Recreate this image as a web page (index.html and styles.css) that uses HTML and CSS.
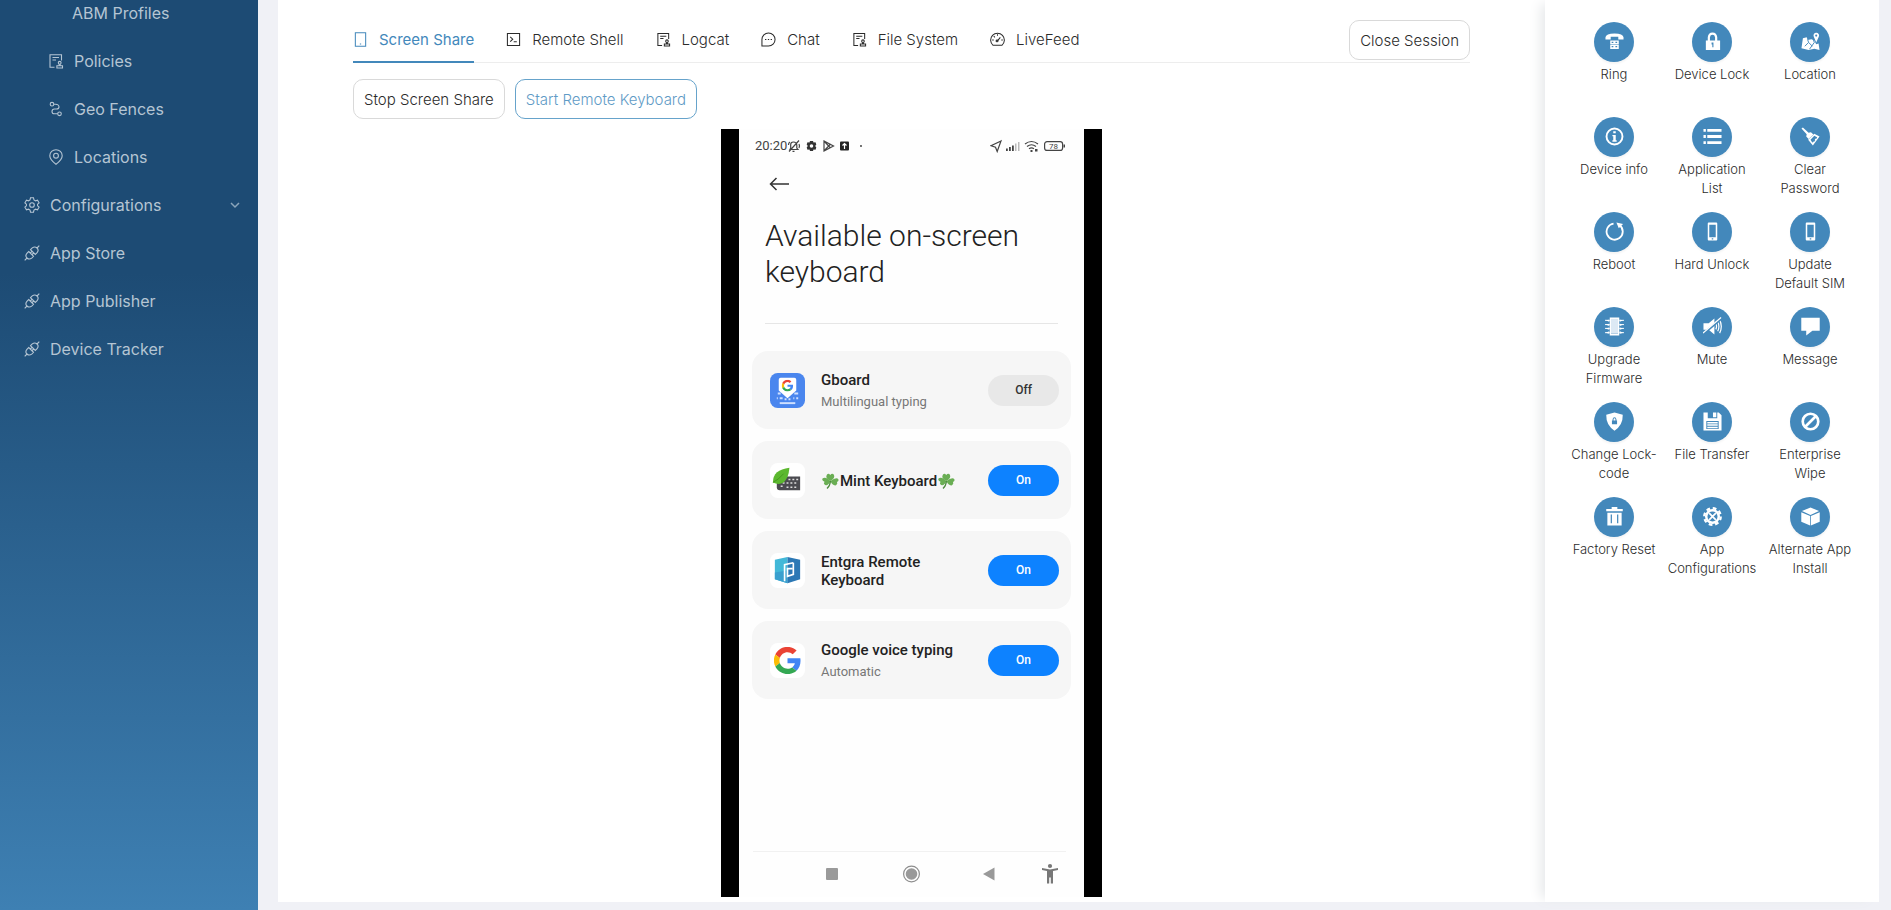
FILE: index.html
```html
<!DOCTYPE html>
<html lang="en">
<head>
<meta charset="utf-8">
<title>Device session</title>
<link rel="stylesheet" href="styles.css">
</head>
<body>
<svg class="defs" aria-hidden="true">
  <defs>
    <symbol id="i-audit" viewBox="0 0 16 16"><path d="M6.500 14.300H2V1.700H13.500V7.500M4.500 4.500H11M4.500 7H8" /><circle cx="11.700" cy="9.800" r="1.400"/><path d="M11.200 11.200V12.700M12.200 11.200V12.700M8.900 12.700H14.500V15H8.900Z"/></symbol>
    <symbol id="i-fence" viewBox="0 0 16 16"><circle cx="4" cy="3.200" r="1.800"/><circle cx="11.500" cy="12.800" r="1.800"/><path d="M5.800 3.300H7.500Q11 3.500 11 6Q11 8 8.500 8H6.500Q4 8 4 10.400T6.500 12.800H9.700"/></symbol>
    <symbol id="i-pin" viewBox="0 0 16 16"><path d="M8 15.200C4.500 12.600 1.800 10 1.800 6.700A6.200 6 0 0 1 14.200 6.700C14.200 10 11.500 12.600 8 15.200Z"/><circle cx="8" cy="6.700" r="2.400"/></symbol>
    <symbol id="i-gear" viewBox="0 0 16 16"><path d="M6.500 .8H9.500L10 3L11.500 3.800L13.500 3.200L15.100 5.800L13.600 7.200V8.800L15.100 10.200L13.500 12.800L11.500 12.200L10 13L9.500 15.200H6.500L6 13L4.500 12.200L2.500 12.800L.9 10.200L2.400 8.800V7.200L.9 5.800L2.500 3.200L4.500 3.800L6 3Z"/><circle cx="8" cy="8" r="2.300"/></symbol>
    <symbol id="i-api" viewBox="0 0 16 16"><path d="M15.300 .7L13 3M3 13L.7 15.300M6.500 4.700L8.300 2.900Q10.800 1 13 3T13.100 7.700L11.300 9.500ZM4.700 6.500L9.500 11.300L7.700 13.100Q5.200 15 3 13T2.900 8.300ZM6.300 8L8 6.300M8 9.700L9.700 8"/></symbol>
    <symbol id="i-tablet" viewBox="0 0 16 16"><path d="M2.500 .8H13.500V15.200H2.500ZM7.300 12.800H8.700"/></symbol>
    <symbol id="i-code" viewBox="0 0 16 16"><path d="M1.500 1.500H14.500V14.500H1.500ZM4.500 5.300L7.200 7.700L4.500 10.200M8.200 10.500H11.500"/></symbol>
    <symbol id="i-chat" viewBox="0 0 16 16"><path d="M1 15V8A7 7 0 1 1 8 15ZM4.300 8H5.700M7.300 8H8.700M10.300 8H11.700"/></symbol>
    <symbol id="i-dash" viewBox="0 0 16 16"><path d="M3.300 14.200A7.300 7.300 0 1 1 12.700 14.200ZM8 9.500L11 5.800M8 2.500V4M2.300 8.500H4M12 8.500H13.700M4 4.500L5.200 5.700"/><circle cx="7.500" cy="9.500" r="1"/></symbol>
    <symbol id="i-clover" viewBox="0 0 18 18"><g fill="#6aae54"><path d="M9 9Q3 6 5.500 2.500Q7.200 1 8.700 3Q10.800 .8 12.400 2.800Q14 6 9 9Z"/><path d="M9 9Q7 14 3.500 13Q1.500 11.500 3 9.700Q0 8.500 1 6.500Q4 4 9 9Z"/><path d="M9 9Q15 4.500 17 7.500Q17.500 9.200 15.500 10Q16.500 12 14.500 13.300Q11 14 9 9Z"/></g><path d="M9 9Q8.500 14 5.500 16.500" fill="none" stroke="#4f8c40" stroke-width="1.300"/></symbol>
    <symbol id="i-phone" viewBox="0 0 20 20"><path fill-rule="evenodd" d="M6 .5H14Q15 .5 15 1.500V18.500Q15 19.500 14 19.500H6Q5 19.500 5 18.500V1.500Q5 .5 6 .5ZM6.600 3V16H13.400V3ZM9.200 17.200V18.400H10.800V17.200Z"/></symbol>
    <symbol id="i-google" viewBox="0 0 48 48"><path fill="#ea4335" d="M24 9.500c3.540 0 6.710 1.220 9.210 3.600l6.850-6.850C35.900 2.380 30.470 0 24 0 14.620 0 6.510 5.380 2.560 13.220l7.980 6.190C12.430 13.720 17.740 9.500 24 9.500z"/><path fill="#4285f4" d="M46.980 24.550c0-1.570-.15-3.090-.38-4.550H24v9.020h12.940c-.58 2.960-2.260 5.480-4.780 7.180l7.730 6c4.510-4.180 7.090-10.360 7.090-17.650z"/><path fill="#fbbc05" d="M10.530 28.590c-.48-1.450-.76-2.990-.76-4.590s.27-3.140.76-4.590l-7.980-6.190C.92 16.460 0 20.120 0 24c0 3.880.92 7.540 2.560 10.780l7.970-6.190z"/><path fill="#34a853" d="M24 48c6.480 0 11.930-2.130 15.890-5.810l-7.730-6c-2.150 1.450-4.920 2.300-8.160 2.300-6.260 0-11.570-4.220-13.470-9.910l-7.980 6.190C6.510 42.620 14.620 48 24 48z"/></symbol>
  </defs>
</svg>

<div class="app">
  <nav class="sidebar" aria-label="Main">
    <a class="nav-link nav-text" href="#">ABM Profiles</a>
    <a class="nav-link nav-sub" href="#"><svg class="line-icon"><use href="#i-audit"/></svg>Policies</a>
    <a class="nav-link nav-sub" href="#"><svg class="line-icon"><use href="#i-fence"/></svg>Geo Fences</a>
    <a class="nav-link nav-sub" href="#"><svg class="line-icon"><use href="#i-pin"/></svg>Locations</a>
    <a class="nav-link" href="#"><svg class="line-icon"><use href="#i-gear"/></svg>Configurations<svg class="chevron" viewBox="0 0 10 10"><path d="M1 3L5 7L9 3"/></svg></a>
    <a class="nav-link" href="#"><svg class="line-icon"><use href="#i-api"/></svg>App Store</a>
    <a class="nav-link" href="#"><svg class="line-icon"><use href="#i-api"/></svg>App Publisher</a>
    <a class="nav-link" href="#"><svg class="line-icon"><use href="#i-api"/></svg>Device Tracker</a>
  </nav>

  <div class="page">
    <main class="session">
      <header class="tabbar">
        <div class="tabs" role="tablist">
          <button class="tab tab-active" role="tab" aria-selected="true"><svg class="line-icon"><use href="#i-tablet"/></svg>Screen Share</button>
          <button class="tab" role="tab"><svg class="line-icon"><use href="#i-code"/></svg>Remote Shell</button>
          <button class="tab" role="tab"><svg class="line-icon"><use href="#i-audit"/></svg>Logcat</button>
          <button class="tab" role="tab"><svg class="line-icon"><use href="#i-chat"/></svg>Chat</button>
          <button class="tab" role="tab"><svg class="line-icon"><use href="#i-audit"/></svg>File System</button>
          <button class="tab" role="tab"><svg class="line-icon"><use href="#i-dash"/></svg>LiveFeed</button>
        </div>
        <button class="btn">Close Session</button>
      </header>
      <div class="actions">
        <button class="btn">Stop Screen Share</button>
        <button class="btn btn-accent">Start Remote Keyboard</button>
      </div>

      <section class="phone" aria-label="Shared screen">
        <div class="status">
          <span class="clock">20:20</span>
          <svg class="status-left" viewBox="0 0 80 14"><g fill="none" stroke="#444" stroke-width="1.200"><path d="M3 10.500H11L9.800 9V6Q9.500 3 6.500 3T3.700 6V9ZM5.500 12.300H7.500M2 12.500L12 1.500M1.500 6Q1.500 4 2.800 3M12 9Q13 7 12 5"/><path d="M37 2V12L46.500 7ZM37 2L43.500 9M37 12L43.500 5"/></g><path fill="#333" fill-rule="evenodd" d="M23 2H26L26.500 3.500L28.500 3.300L29.300 5.500L28.200 7L29.300 8.500L28.500 10.700L26.500 10.500L26 12H23L22.500 10.500L20.500 10.700L19.700 8.500L20.800 7L19.700 5.500L20.500 3.300L22.500 3.500ZM24.500 5.200A1.800 1.800 0 1 0 24.500 8.800A1.800 1.800 0 1 0 24.500 5.200Z"/><rect x="53" y="2.500" width="9" height="9" rx="1" fill="#222"/><path d="M57.500 10V5M55.500 6.500L57.500 4.500L59.500 6.500" stroke="#fff" fill="none" stroke-width="1.200"/><circle cx="74" cy="7" r=".9" fill="#333"/></svg>
          <svg class="status-right" viewBox="0 0 76 14"><g fill="none" stroke="#444" stroke-width="1.200"><path d="M11 2L1 6.700L5.500 8.300L7.200 12.500Z"/><path d="M35 5Q41.500 0 48 5M37 7.500Q41.500 4 46 7.500M39 9.800Q41.500 8 44 9.800"/><rect x="54.600" y="2.600" width="18" height="8.800" rx="2.500"/></g><path fill="#444" d="M16 9.500H17.800V12H16ZM19 8H20.800V12H19ZM22 6.500H23.800V12H22ZM40.500 11H42.500V13H40.500ZM45 10H47.500V12.500H45ZM73.500 5.500H75V8.500H73.500Z"/><path fill="#bbb" d="M25 4.500H26.500V12H25ZM28 3H29.500V12H28Z"/><text x="63.500" y="10" class="battery">78</text></svg>
        </div>
        <svg class="back" viewBox="0 0 20 14"><path d="M20 7H1.500M7.500 1L1.500 7L7.500 13"/></svg>
        <h1 class="phone-title">Available on-screen keyboard</h1>
        <ul class="keyboards">
          <li class="keyboard">
            <svg class="app-icon" viewBox="0 0 36 36"><rect width="36" height="36" rx="8" fill="#4a86ee"/><path d="M11 5H25Q27 5 27 7V18L18 26L9 18V7Q9 5 11 5Z" fill="#fff"/><use href="#i-google" x="12" y="7" width="12" height="12"/><path d="M8 21H11M13 26H10M7 26H8M15 27H17M19 27H21M25 21H29M24 26H25M27 26H29" stroke="#cfe0ff" stroke-width="2"/><path d="M10 31H26" stroke="#cfe0ff" stroke-width="2"/></svg>
            <div class="kb-text"><h2>Gboard</h2><p>Multilingual typing</p></div>
            <button class="switch switch-off">Off</button>
          </li>
          <li class="keyboard">
            <svg class="app-icon" viewBox="0 0 36 36"><rect width="36" height="36" rx="8" fill="#fff"/><path d="M7 14H31V28H10Q7 28 7 25Z" fill="#4b4b50"/><path d="M19 17H29M13 20.500H29M11 24H14M17 25H27" stroke="#ddd" stroke-width="1.500" stroke-dasharray="2 2"/><path d="M3 20Q3 7 20 5Q19 16 14 20Q9 23 3 20Z" fill="#5cb82f"/><path d="M3 20Q9 17 14 11" stroke="#45981f" fill="none"/></svg>
            <div class="kb-text"><h2 class="kb-clover"><svg><use href="#i-clover"/></svg>Mint Keyboard<svg><use href="#i-clover"/></svg></h2></div>
            <button class="switch">On</button>
          </li>
          <li class="keyboard">
            <svg class="app-icon" viewBox="0 0 36 36"><rect width="36" height="36" rx="8" fill="#fff"/><path d="M5 7L18 4V31L5 27Z" fill="#42b8d8"/><path d="M5 20L18 18V31L5 27Z" fill="#3aa0cf"/><path d="M18 4L31 7V27L18 31Z" fill="#2c78b5"/><path d="M15 29V12L24 10M24 10V22L18 24V16H23" fill="none" stroke="#fff" stroke-width="1.700"/></svg>
            <div class="kb-text"><h2>Entgra Remote Keyboard</h2></div>
            <button class="switch">On</button>
          </li>
          <li class="keyboard">
            <svg class="app-icon" viewBox="0 0 36 36"><rect width="36" height="36" rx="8" fill="#fff"/><use href="#i-google" x="4" y="4" width="28" height="28"/></svg>
            <div class="kb-text"><h2>Google voice typing</h2><p>Automatic</p></div>
            <button class="switch">On</button>
          </li>
        </ul>
        <svg class="softkeys" viewBox="-1 0 319 46"><path d="M0 .5H313" stroke="#f1f1f1"/><rect x="73" y="17" width="12" height="12" rx="1" fill="#9a9a9a"/><circle cx="158.500" cy="23" r="7.900" fill="none" stroke="#8e8e8e" stroke-width="1.200"/><circle cx="158.500" cy="23" r="5.800" fill="#999"/><path d="M230 23L241.500 16.500V29.500Z" fill="#999"/><g fill="#777"><circle cx="297" cy="15" r="2.100"/><path d="M289 17L297 18.500L305 17V19L300 20V32.500H297.800V26.500H296.200V32.500H294V20L289 19Z"/></g></svg>
      </section>
    </main>

    <aside class="operations" aria-label="Device operations">
      <button class="op"><span class="op-icon"><svg viewBox="0 0 20 20"><path d="M.5 8V5.500Q1 1.500 10 1.500T19.500 5.500V8H14V5H6V8Z"/><path fill-rule="evenodd" d="M5.500 9H14.500V18H5.500ZM7 10.300V11.700H8.800V10.300ZM11 10.300V11.700H12.800V10.300ZM7 14.800V16H8.800V14.800ZM11 14.800V16H12.800V14.800ZM5.500 12.800V13.500H14.500V12.800Z"/></svg></span>Ring</button>
      <button class="op"><span class="op-icon"><svg viewBox="0 0 20 20"><path fill-rule="evenodd" d="M3 9H5V5.500Q5.500 .5 10 .5T15 5.500V9H18V19H3ZM7.300 9H12.700V5.500Q12.300 2.900 10 2.900T7.300 5.500ZM9 11V13.200H9.800V16H11V11Z"/></svg></span>Device Lock</button>
      <button class="op"><span class="op-icon"><svg viewBox="0 0 20 20"><path d="M2 6.500L6 5.500L7 8.500L11 7.500L14 9L16 13L18.500 12L19.500 19L14 17.500L8 19L.5 17Z"/><path d="M4 15L8 11L7 8M8 11L12 15M9 18L14 11L13 8" stroke="#4388bb" fill="none"/><path fill-rule="evenodd" d="M16 .8A2.900 2.900 0 0 1 18.700 5L16 11L13.500 5A2.900 2.900 0 0 1 16 .8ZM16 2.700A1.100 1.100 0 1 0 16 4.900A1.100 1.100 0 1 0 16 2.700Z"/></svg></span>Location</button>

      <button class="op"><span class="op-icon"><svg viewBox="0 0 20 20"><circle cx="10" cy="10" r="8.400" fill="none" stroke="#fff" stroke-width="2"/><path d="M8.700 4.500H11.300V6.700H8.700ZM7.800 8.300H11.300V14H12.300V15.500H7.800V14H8.700V9.800H7.800Z"/></svg></span>Device info</button>
      <button class="op"><span class="op-icon"><svg viewBox="0 0 20 20"><path d="M.5 2H3V5H.5ZM4.500 2H19.500V5H4.500ZM.5 8.500H3V11.500H.5ZM4.500 8.500H19.500V11.500H4.500ZM.5 15H3V18H.5ZM4.500 15H19.500V18H4.500Z"/></svg></span>Application List</button>
      <button class="op"><span class="op-icon"><svg viewBox="0 0 20 20"><path d="M.5 1.500L2 .5L8 6L10.500 5.500L13 8L8 12.500L5.500 10L6 7.500Z"/><path fill-rule="evenodd" d="M14 7L19.500 10L12.500 19.500L7.500 13.500ZM14 9.200L10 13.500L12 16.500L13 15L13.500 16L15 13.800L14.500 12.500L16.500 12L17 10.800Z"/></svg></span>Clear Password</button>

      <button class="op"><span class="op-icon"><svg viewBox="0 0 20 20"><path d="M9 1.700A8.500 8.500 0 1 0 15.500 3.500" fill="none" stroke="#fff" stroke-width="1.900"/><path d="M12 .5L19 2L14.500 6.500Z"/></svg></span>Reboot</button>
      <button class="op"><span class="op-icon"><svg><use href="#i-phone"/></svg></span>Hard Unlock</button>
      <button class="op"><span class="op-icon"><svg><use href="#i-phone"/></svg></span>Update Default&nbsp;SIM</button>

      <button class="op"><span class="op-icon"><svg viewBox="0 0 20 20"><path fill-rule="evenodd" d="M5 .5H15V19.500H5ZM6.300 2V17.500H13.700V2Z"/><path fill="#dce9f4" d="M6.300 2H13.700V17.500H6.300Z"/><path d="M.5 3.500L4.500 3V5ZM.5 8L4.500 7V9.500ZM.5 12L4.500 11V13.500ZM.5 16.500L4.500 15V17.500ZM19.500 3.500L15.500 3V5ZM19.500 8L15.500 7V9.500ZM19.500 12L15.500 11V13.500ZM19.500 16.500L15.500 15V17.500Z"/><path d="M0 3.500H5M0 8H5M0 12H5M0 16.500H5M15 3.500H20M15 8H20M15 12H20M15 16.500H20" stroke="#fff"/></svg></span>Upgrade Firmware</button>
      <button class="op"><span class="op-icon"><svg viewBox="0 0 20 20"><path d="M.5 6.500H6L12 1.500V18.500L6 13.500H.5Z"/><path d="M13.500 7Q15 10 13.500 13M15.500 5Q18 10 15.500 15M17.500 3Q21 10 17.500 17" fill="none" stroke="#fff" stroke-width="1.300"/><path d="M0 18L19 2" stroke="#4388bb" stroke-width="2.500"/><path d="M0 17L19 .5" stroke="#fff" stroke-width="1.300"/></svg></span>Mute</button>
      <button class="op"><span class="op-icon"><svg viewBox="0 0 20 20"><path d="M.3 .8H19.700V14.500H12L5.500 19.500V14.500H.3Z"/></svg></span>Message</button>

      <button class="op"><span class="op-icon"><svg viewBox="0 0 20 20"><path fill-rule="evenodd" d="M10 .5L18.700 3Q19 14 10 19.700Q1 14 1.300 3ZM7.300 9H8V7.500Q8.300 5.500 10 5.500T12 7.500V9H12.700V13H7.300ZM9 9H11V7.500Q11 6.500 10 6.500T9 7.500Z"/></svg></span>Change Lock-code</button>
      <button class="op"><span class="op-icon"><svg viewBox="0 0 20 20"><path fill-rule="evenodd" d="M.5 .5H5V6.500H15V.5H16.500L19.500 3.500V19.500H.5ZM3.500 9.500V18H16.500V9.500ZM4.500 10.500H15.500V12H4.500ZM4.500 13H15.500V14.500H4.500ZM4.500 15.500H15.500V17H4.500ZM10.500 .5H14V5.500H10.500Z"/></svg></span>File Transfer</button>
      <button class="op"><span class="op-icon"><svg viewBox="0 0 20 20"><circle cx="10" cy="10" r="8.200" fill="none" stroke="#fff" stroke-width="2.800"/><path d="M4.500 15.500L15.500 4.500" stroke="#fff" stroke-width="2.800"/></svg></span>Enterprise Wipe</button>

      <button class="op"><span class="op-icon"><svg viewBox="0 0 20 20"><path fill-rule="evenodd" d="M7 0H13V2H18.700V4.500H1.300V2H7ZM2.500 6H17.500V19.500H2.500ZM6 8V17H7.300V8ZM12.700 8V17H14V8Z"/></svg></span>Factory Reset</button>
      <button class="op"><span class="op-icon"><svg viewBox="0 0 20 20"><circle cx="10" cy="10" r="8.700" fill="none" stroke="#fff" stroke-width="2.400" stroke-dasharray="3.900 2.933"/><circle cx="10" cy="10" r="6.600" fill="none" stroke="#fff" stroke-width="2.600"/><path d="M6.500 6.500L13.500 13.500M13.500 6.500L6.500 13.500" stroke="#fff" stroke-width="1.800"/></svg></span>App Configurations</button>
      <button class="op"><span class="op-icon"><svg viewBox="0 0 20 20"><path d="M10 .5L19 4.300L10 8.300L1 4.300ZM.3 5.500L9.600 9.500V19.500L.3 15.500ZM19.700 5.500L10.400 9.500V19.500L19.700 15.500Z"/></svg></span>Alternate App Install</button>
    </aside>
  </div>
</div>
</body>
</html>
```
FILE: styles.css
```css
* { box-sizing: border-box; }

body {
  margin: 0;
  background: #f0f2f5;
  color: #2b2b2b;
  font-family: Inter, "Open Sans", sans-serif;
  font-size: 15px;
}

button {
  font: inherit;
  color: inherit;
  background: none;
  border: 0;
  padding: 0;
}

.defs { display: none; }

.app {
  display: flex;
  min-height: 100vh;
  overflow: hidden;
  background: #f0f1f6;
}

/* Sidebar, scrolled part-way through its first entry */
.sidebar {
  flex: 0 0 258px;
  background: linear-gradient(#1d4b74 30%, #3e80b3);
}

.nav-link {
  display: flex;
  align-items: center;
  gap: 10px;
  height: 48px;
  padding: 0 18px 0 24px;
  color: #b5c5d3;
  font-size: 16px;
  text-decoration: none;
}

.nav-link:first-child { margin-top: -11px; }
.nav-sub { padding-left: 48px; }
.nav-text { padding-left: 72px; }

.line-icon {
  flex: none;
  width: 16px;
  height: 16px;
  fill: none;
  stroke: currentColor;
  stroke-width: 1.100;
}

.chevron {
  width: 10px;
  height: 10px;
  margin-left: auto;
  fill: none;
  stroke: #8ba5bb;
  stroke-width: 1.500;
}

.page {
  flex: 1;
  display: flex;
  min-width: 0;
  margin: 0 12px 8px 20px;
  background: #fff;
}

.session {
  flex: 1;
  display: flex;
  flex-direction: column;
  min-width: 0;
  padding: 16px 75px 5px;
}

.tabbar {
  display: flex;
  justify-content: space-between;
  align-items: flex-start;
  height: 47px;
  border-bottom: 1px solid #ededed;
}

.tabs { display: flex; gap: 32px; }

.tab {
  display: flex;
  align-items: center;
  gap: 11px;
  height: 47px;
  padding-top: 2px;
  border-bottom: 2px solid transparent;
  font-weight: 300;
  white-space: nowrap;
}

.tab .line-icon { width: 15px; height: 15px; }
.tab-active { color: #4388bb; border-color: #4388bb; font-weight: 400; }

.btn {
  height: 40px;
  padding: 0 10px;
  border: 1px solid #d9d9d9;
  border-radius: 10px;
  background: #fff;
  font-weight: 300;
  white-space: nowrap;
}

.tabbar .btn { margin-top: 4px; }
.btn-accent { border-color: #66a3cb; color: #5f9bc6; }

.actions {
  display: flex;
  gap: 10px;
  padding: 16px 0 10px;
}

/* Mirrored phone screen */
.phone {
  flex: 1;
  display: flex;
  flex-direction: column;
  align-self: center;
  width: 381px;
  padding: 0 13px;
  border: solid #000;
  border-width: 0 18px;
  background: #fefefe;
  font-family: Roboto, sans-serif;
  color: #222;
}

.status {
  display: flex;
  align-items: center;
  height: 33px;
  padding: 0 5px 0 3px;
}

.clock { font-size: 13px; color: #444; }
.status-left { width: 80px; height: 14px; }
.status-right { width: 76px; height: 14px; margin-left: auto; }
.battery { font-size: 8px; text-anchor: middle; fill: #444; }

.back {
  width: 20px;
  height: 14px;
  margin: 15px 0 0 17px;
  fill: none;
  stroke: #333;
  stroke-width: 1.500;
}

.phone-title {
  margin: 0 13px;
  padding: 27px 0 33px;
  border-bottom: 1px solid #e6e6e6;
  font-size: 30px;
  font-weight: 300;
  line-height: 36px;
}

.keyboards {
  display: grid;
  gap: 12px;
  margin: 27px 0 0;
  padding: 0;
  list-style: none;
}

.keyboard {
  display: flex;
  align-items: center;
  gap: 16px;
  height: 78px;
  padding: 0 12px 0 18px;
  border-radius: 16px;
  background: #f6f6f6;
}

.app-icon { flex: none; width: 35px; height: 35px; }
.kb-text { flex: 1; padding-top: 2px; }

.kb-text h2 {
  margin: 0;
  font-size: 15px;
  font-weight: 500;
  line-height: 18px;
}

.kb-text p {
  margin: 4px 0 0;
  color: #777;
  font-size: 13px;
  line-height: 18px;
}

.kb-clover { display: flex; align-items: center; white-space: nowrap; }
.kb-clover svg { width: 19px; height: 18px; }

.switch {
  flex: none;
  width: 71px;
  height: 31px;
  border-radius: 16px;
  background: #0d82ff;
  color: #fff;
  font-size: 12px;
  font-weight: 500;
}

.switch-off { background: #e8e8e8; color: #333; }

.softkeys { width: 100%; height: 46px; margin-top: auto; }

/* Operations panel */
.operations {
  flex: 0 0 334px;
  display: grid;
  grid-template-columns: repeat(3, 98px);
  grid-auto-rows: 95px;
  justify-content: center;
  align-content: start;
  padding-top: 22px;
  box-shadow: -8px 0 12px -4px #e6e8ea;
}

.op {
  display: flex;
  flex-direction: column;
  align-items: center;
  gap: 3px;
  padding: 0 5px;
  font-size: 13px;
  font-weight: 300;
  line-height: 19px;
  text-align: center;
}

.op-icon {
  display: grid;
  place-items: center;
  width: 40px;
  height: 40px;
  border-radius: 50%;
  background: #4388bb;
  box-shadow: 0 2px 2px #0000000b;
}

.op-icon svg { width: 19px; height: 19px; margin-bottom: 2px; fill: #fff; }
```
